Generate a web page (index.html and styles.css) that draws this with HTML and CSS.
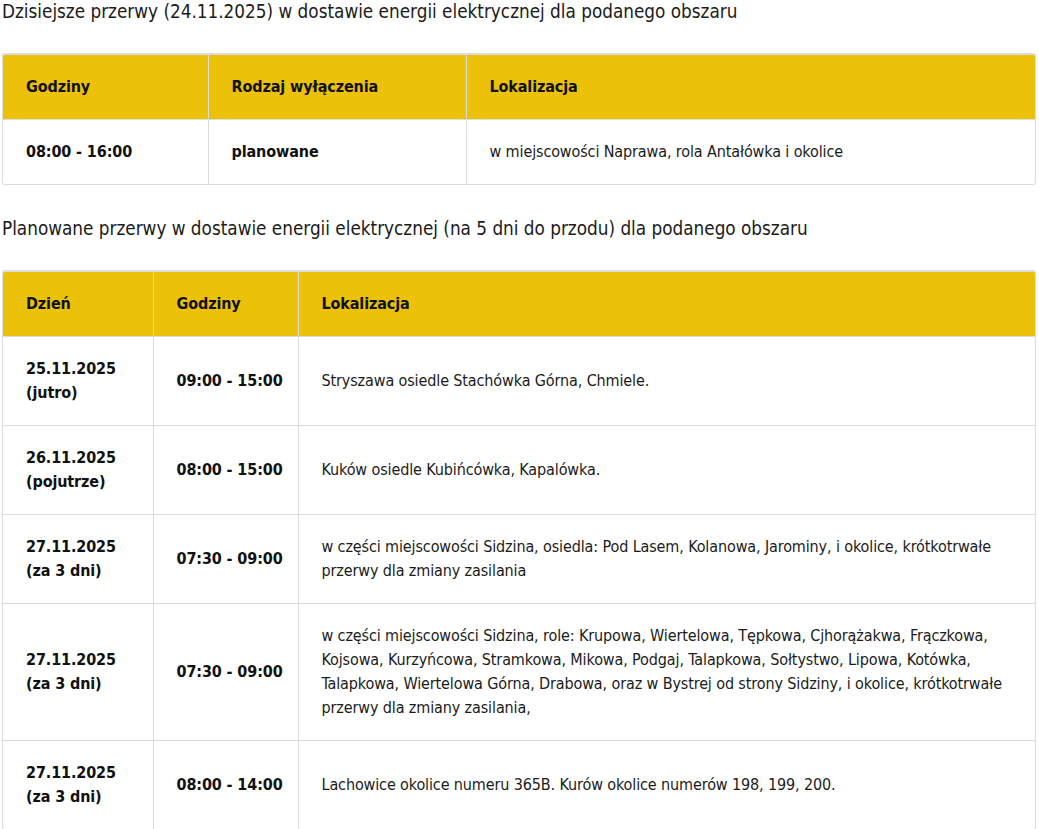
FILE: index.html
```html
<!DOCTYPE html>
<html lang="pl">
<head>
<meta charset="utf-8">
<title>Przerwy w dostawie energii</title>
<link rel="stylesheet" href="styles.css">
</head>
<body>
<div class="page">
  <h2 class="title">Dzisiejsze przerwy (24.11.2025) w dostawie energii elektrycznej dla podanego obszaru</h2>
  <div class="frame">
    <table class="outages">
      <colgroup><col class="c-a"><col class="c-b"><col></colgroup>
      <thead>
        <tr><th>Godziny</th><th>Rodzaj wyłączenia</th><th>Lokalizacja</th></tr>
      </thead>
      <tbody>
        <tr><td class="b">08:00 - 16:00</td><td class="b">planowane</td><td>w miejscowości Naprawa, rola Antałówka i okolice</td></tr>
      </tbody>
    </table>
  </div>

  <h2 class="title second">Planowane przerwy w dostawie energii elektrycznej (na 5 dni do przodu) dla podanego obszaru</h2>
  <div class="frame">
    <table class="outages">
      <colgroup><col class="c-d"><col class="c-e"><col></colgroup>
      <thead>
        <tr><th>Dzień</th><th>Godziny</th><th>Lokalizacja</th></tr>
      </thead>
      <tbody>
        <tr><td class="b">25.11.2025<br>(jutro)</td><td class="b nw">09:00 - 15:00</td><td>Stryszawa osiedle Stachówka Górna, Chmiele.</td></tr>
        <tr><td class="b">26.11.2025<br>(pojutrze)</td><td class="b nw">08:00 - 15:00</td><td>Kuków osiedle Kubińcówka, Kapalówka.</td></tr>
        <tr><td class="b">27.11.2025<br>(za 3 dni)</td><td class="b nw">07:30 - 09:00</td><td>w części miejscowości Sidzina, osiedla: Pod Lasem, Kolanowa, Jarominy, i okolice, krótkotrwałe przerwy dla zmiany zasilania</td></tr>
        <tr><td class="b">27.11.2025<br>(za 3 dni)</td><td class="b nw">07:30 - 09:00</td><td>w części miejscowości Sidzina, role: Krupowa, Wiertelowa, Tępkowa, Cjhorążakwa, Frączkowa, Kojsowa, Kurzyńcowa, Stramkowa, Mikowa, Podgaj, Talapkowa, Sołtystwo, Lipowa, Kotówka, Talapkowa, Wiertelowa Górna, Drabowa, oraz w Bystrej od strony Sidziny, i okolice, krótkotrwałe przerwy dla zmiany zasilania,</td></tr>
        <tr><td class="b">27.11.2025<br>(za 3 dni)</td><td class="b nw">08:00 - 14:00</td><td>Lachowice okolice numeru 365B. Kurów okolice numerów 198, 199, 200.</td></tr>
      </tbody>
    </table>
  </div>
</div>
</body>
</html>
```

FILE: styles.css
```css
html, body {
  margin: 0;
  padding: 0;
  background: #ffffff;
}

body {
  font-family: "DejaVu Sans Condensed", "DejaVu Sans", sans-serif;
  font-stretch: condensed;
  color: #1b1b1b;
}

.page {
  padding: 0 2px;
}

.title {
  margin: 0 0 29px 0;
  font-size: 18.75px;
  line-height: 24px;
  font-weight: 400;
  color: #1b1b1b;
}

.title.second {
  margin-top: 32px;
}

.frame {
  width: 1034px;
  border: 1px solid #dcdcdc;
  border-top-width: 2px;
  border-radius: 3px;
  overflow: hidden;
  box-sizing: border-box;
}

.outages {
  width: 100%;
  border-collapse: collapse;
  border-style: hidden;
  table-layout: fixed;
  font-size: 16px;
  line-height: 24px;
  letter-spacing: -0.12px;
}

.c-a { width: 205px; }
.c-b { width: 258px; }
.c-d { width: 150px; }
.c-e { width: 145px; }

.outages th,
.outages td {
  border: 1px solid #dcdcdc;
  padding: 20px 23px;
  text-align: left;
  vertical-align: middle;
}

.outages th {
  background: #ecc10a;
  font-weight: 700;
  color: #111111;
}

.outages td.b {
  font-weight: 700;
  color: #111111;
}

.outages td.nw {
  white-space: nowrap;
  padding-right: 0;
}
```
